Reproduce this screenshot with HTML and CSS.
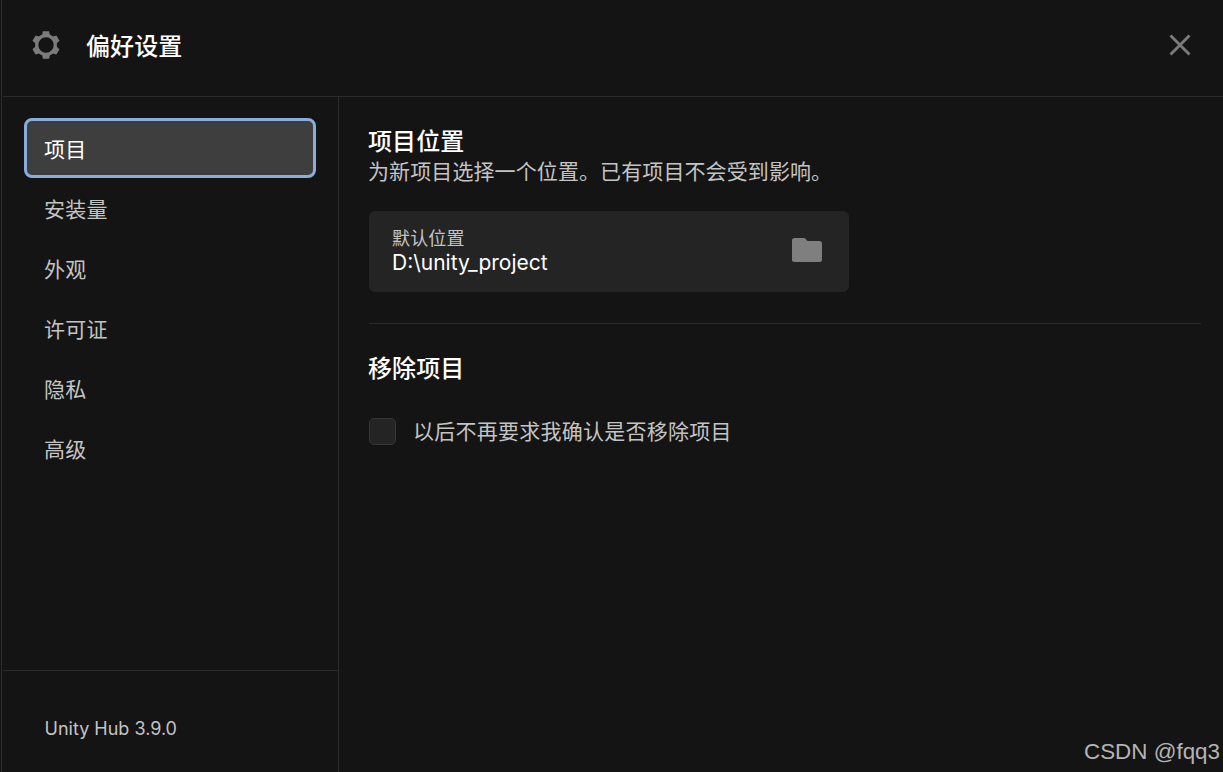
FILE: index.html
```html
<!DOCTYPE html>
<html lang="zh-CN">
<head>
    <meta charset="UTF-8">
    <meta name="viewport" content="width=device-width, initial-scale=1.0">
    <title>偏好设置</title>
    <link rel="stylesheet" href="styles.css">
</head>
<body>
    <div class="window">
        <!-- Header -->
        <header class="header">
            <svg class="gear" width="28" height="28" viewBox="0 0 28 28">
                <g fill="#7b7b7b">
                    <path id="tooth" d="M9.8 5.5 L10.9 0.2 H17.1 L18.2 5.5 Z"/>
                    <use href="#tooth" transform="rotate(60 14 14)"/>
                    <use href="#tooth" transform="rotate(120 14 14)"/>
                    <use href="#tooth" transform="rotate(180 14 14)"/>
                    <use href="#tooth" transform="rotate(240 14 14)"/>
                    <use href="#tooth" transform="rotate(300 14 14)"/>
                </g>
                <circle cx="14" cy="14" r="9.3" fill="none" stroke="#7b7b7b" stroke-width="3.2"/>
            </svg>
            <h1>偏好设置</h1>
            <button class="close" aria-label="关闭">
                <svg width="22" height="22" viewBox="0 0 22 22">
                    <path d="M1.5 1.5 L20.5 20.5 M20.5 1.5 L1.5 20.5" stroke="#7b7b7b" stroke-width="2.9"/>
                </svg>
            </button>
        </header>

        <div class="body">
            <!-- Sidebar -->
            <aside class="sidebar">
                <nav class="menu">
                    <a class="item active">项目</a>
                    <a class="item">安装量</a>
                    <a class="item">外观</a>
                    <a class="item">许可证</a>
                    <a class="item">隐私</a>
                    <a class="item">高级</a>
                </nav>
                <div class="version">Unity Hub 3.9.0</div>
            </aside>

            <!-- Main Content -->
            <main class="content">
                <section class="location">
                    <h2>项目位置</h2>
                    <p>为新项目选择一个位置。已有项目不会受到影响。</p>
                    <div class="path-box">
                        <div>
                            <div class="label">默认位置</div>
                            <div class="path">D:\unity_project</div>
                        </div>
                        <svg class="folder" width="30" height="24" viewBox="0 0 30 24">
                            <path d="M2.5 0 H11.8 Q12.8 0 13.5 .8 L15.5 3 H27.5 Q30 3 30 5.5 V21.5 Q30 24 27.5 24 H2.5 Q0 24 0 21.5 V2.5 Q0 0 2.5 0 Z" fill="#7f7f7f"/>
                        </svg>
                    </div>
                </section>
                <section class="remove">
                    <h2>移除项目</h2>
                    <label class="check">
                        <span class="box"></span>
                        <span class="check-text">以后不再要求我确认是否移除项目</span>
                    </label>
                </section>
            </main>
        </div>
    </div>
    <div class="watermark">CSDN @fqq3</div>
</body>
</html>
```

FILE: styles.css
```css
* {
    box-sizing: border-box;
}

body {
    margin: 0;
    height: 100vh;
    overflow: hidden;
    background: #141414;
    color: #c4c4c4;
    font-family: Inter, "Noto Sans CJK SC", sans-serif;
    font-size: 21px;
}

h1, h2, p {
    margin: 0;
}

h1, h2 {
    color: #fff;
    font-size: 24px;
    font-weight: 500;
    line-height: 30px;
    letter-spacing: 0.1px;
}

.window {
    height: 100vh;
    margin-left: 1px;
    padding-left: 1px;
    border-left: 1px solid #2b2b2b;
    display: flex;
    flex-direction: column;
}

.header {
    height: 97px;
    padding: 0 32px 7px 29px;
    display: flex;
    align-items: center;
    border-bottom: 1px solid #2b2b2b;
}

.header h1 {
    margin-left: 26px;
    padding-top: 5px;
}

.close {
    margin-left: auto;
    padding: 0;
    border: none;
    background: none;
    display: flex;
}

.body {
    flex: 1;
    display: flex;
}

.sidebar {
    width: 336px;
    border-right: 1px solid #2b2b2b;
    display: flex;
    flex-direction: column;
}

.menu {
    flex: 1;
    padding: 21px 22px 0 21px;
}

.item {
    display: flex;
    align-items: center;
    height: 60px;
    padding: 0 17px 1px;
    border: 3px solid transparent;
    border-radius: 8px;
    letter-spacing: 0.3px;
}

.item.active {
    background: #3e3e3e;
    border-color: #8aacdc;
    color: #fff;
}

.version {
    height: 102px;
    padding: 13px 0 0 41.5px;
    border-top: 1px solid #2b2b2b;
    display: flex;
    align-items: center;
    font-size: 18px;
}

.content {
    flex: 1;
    padding: 30px 22px 0 30px;
}

.content h2,
.content p {
    margin-left: -1px;
}

.location {
    height: 197px;
    border-bottom: 1px solid #2b2b2b;
}

.location p {
    line-height: 30px;
    letter-spacing: 0.1px;
}

.path-box {
    width: 480px;
    height: 81px;
    margin-top: 24px;
    padding: 0 27px 2px 23px;
    border-radius: 6px;
    background: #242424;
    display: flex;
    align-items: center;
    justify-content: space-between;
}

.folder {
    margin-bottom: 2px;
}

.label {
    font-size: 18px;
    line-height: 24px;
    letter-spacing: 0.15px;
}

.path {
    color: #fff;
    line-height: 24px;
}

.remove {
    padding-top: 30px;
}

.check {
    margin-top: 31px;
    display: flex;
    align-items: center;
    gap: 17px;
    line-height: 30px;
    letter-spacing: 0.25px;
}

.check-text {
    padding-top: 2px;
}

.box {
    width: 27px;
    height: 27px;
    border: 1px solid #373737;
    border-radius: 5px;
    background: #242424;
}

.watermark {
    position: absolute;
    right: 3px;
    bottom: 6px;
    color: #b4b4b4;
    font-family: "Liberation Sans", sans-serif;
    font-size: 22.4px;
    line-height: 28px;
}
```
